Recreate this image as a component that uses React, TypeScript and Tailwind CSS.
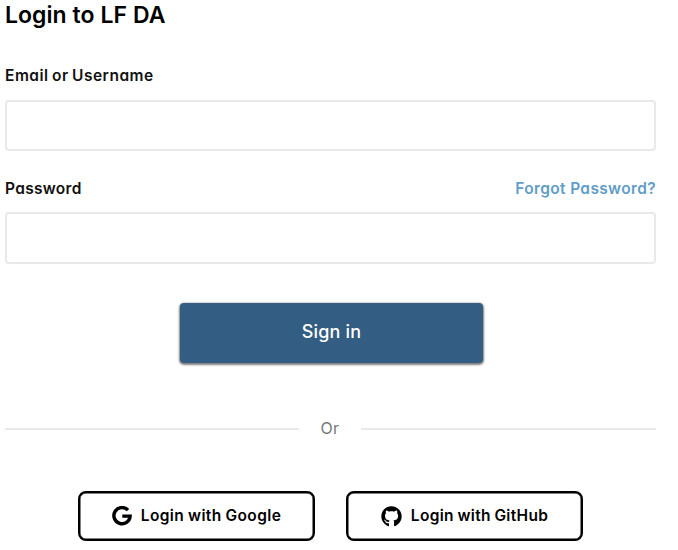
import type { ReactNode } from 'react';
import { FaGithub } from 'react-icons/fa';

function GoogleMark() {
  return (
    <svg className="h-5 w-5 shrink-0" viewBox="0 0 20 20" fill="none" stroke="currentColor" strokeWidth="3.4">
      <path d="M16 4.2A8.1 8.1 0 1 0 18.1 10.1H10.3" strokeLinejoin="miter" />
    </svg>
  );
}

function Field({ id, type, height }: { id: string; type: string; height: string }) {
  return <input id={id} type={type} className={`block w-full rounded-[4px] border-2 border-[#e9e9e9] bg-white px-3 outline-none ${height}`} />;
}

function SocialButton({ icon, children }: { icon: ReactNode; children: ReactNode }) {
  return (
    <button className="flex h-[50px] w-[237px] items-center justify-center gap-[9px] rounded-[8px] border-2 border-black text-[15.5px] font-semibold whitespace-nowrap shadow-[inset_0_0_0_0.5px_#000]">
      {icon}
      {children}
    </button>
  );
}

export default function App() {
  return (
    <main className="h-[550px] w-[678px] overflow-hidden bg-white pl-[5px] font-['Inter',sans-serif] text-[#111] [font-feature-settings:'cv11']">
      <div className="w-[651px]">
        <h1 className="h-[66px] pt-px text-[23px] leading-[28px] font-semibold text-black"><span className="tracking-[0.05px]">Login to LF DA</span></h1>
        <label htmlFor="user" className="block h-[34px] pt-px text-[15.5px] leading-[18px] font-semibold"><span className="tracking-[0.5px] [word-spacing:-1px]">Email or Username</span></label>
        <Field id="user" type="text" height="h-[51px]" />
        <div className="flex h-[61px] justify-between pt-[29px] text-[15.5px] leading-[18px] font-semibold whitespace-nowrap">
          <label htmlFor="password"><span className="tracking-[0.3px]">Password</span></label>
          <a className="text-[#5f9dc7]"><span className="tracking-[0.35px]">Forgot Password?</span></a>
        </div>
        <Field id="password" type="password" height="h-[52px]" />
        <button className="mt-[39px] ml-[175px] block h-[60px] w-[303px] rounded-[4px] bg-[#335d82] pb-[3px] text-[18px] leading-none font-medium text-white shadow-[0_1px_2px_1px_rgba(0,0,0,0.5)]">
          <span className="tracking-[0.2px]">Sign in</span>
        </button>
        <div className="mt-[54px] flex h-[24px] items-center">
          <span className="h-[2px] w-[294px] bg-[#e9e9e9]" />
          <span className="w-[62px] pb-[2px] text-center text-[16px] tracking-[0.4px] text-[#777]">Or</span>
          <span className="h-[2px] flex-1 bg-[#e9e9e9]" />
        </div>
        <div className="mt-[50px] ml-[73px] flex gap-[31px] text-black">
          <SocialButton icon={<GoogleMark />}><span className="tracking-[0.4px] [word-spacing:-0.5px]">Login with Google</span></SocialButton>
          <SocialButton icon={<FaGithub className="h-[21px] w-[21px] shrink-0" />}><span className="tracking-[0.3px] [word-spacing:-0.5px]">Login with GitHub</span></SocialButton>
        </div>
      </div>
    </main>
  );
}
